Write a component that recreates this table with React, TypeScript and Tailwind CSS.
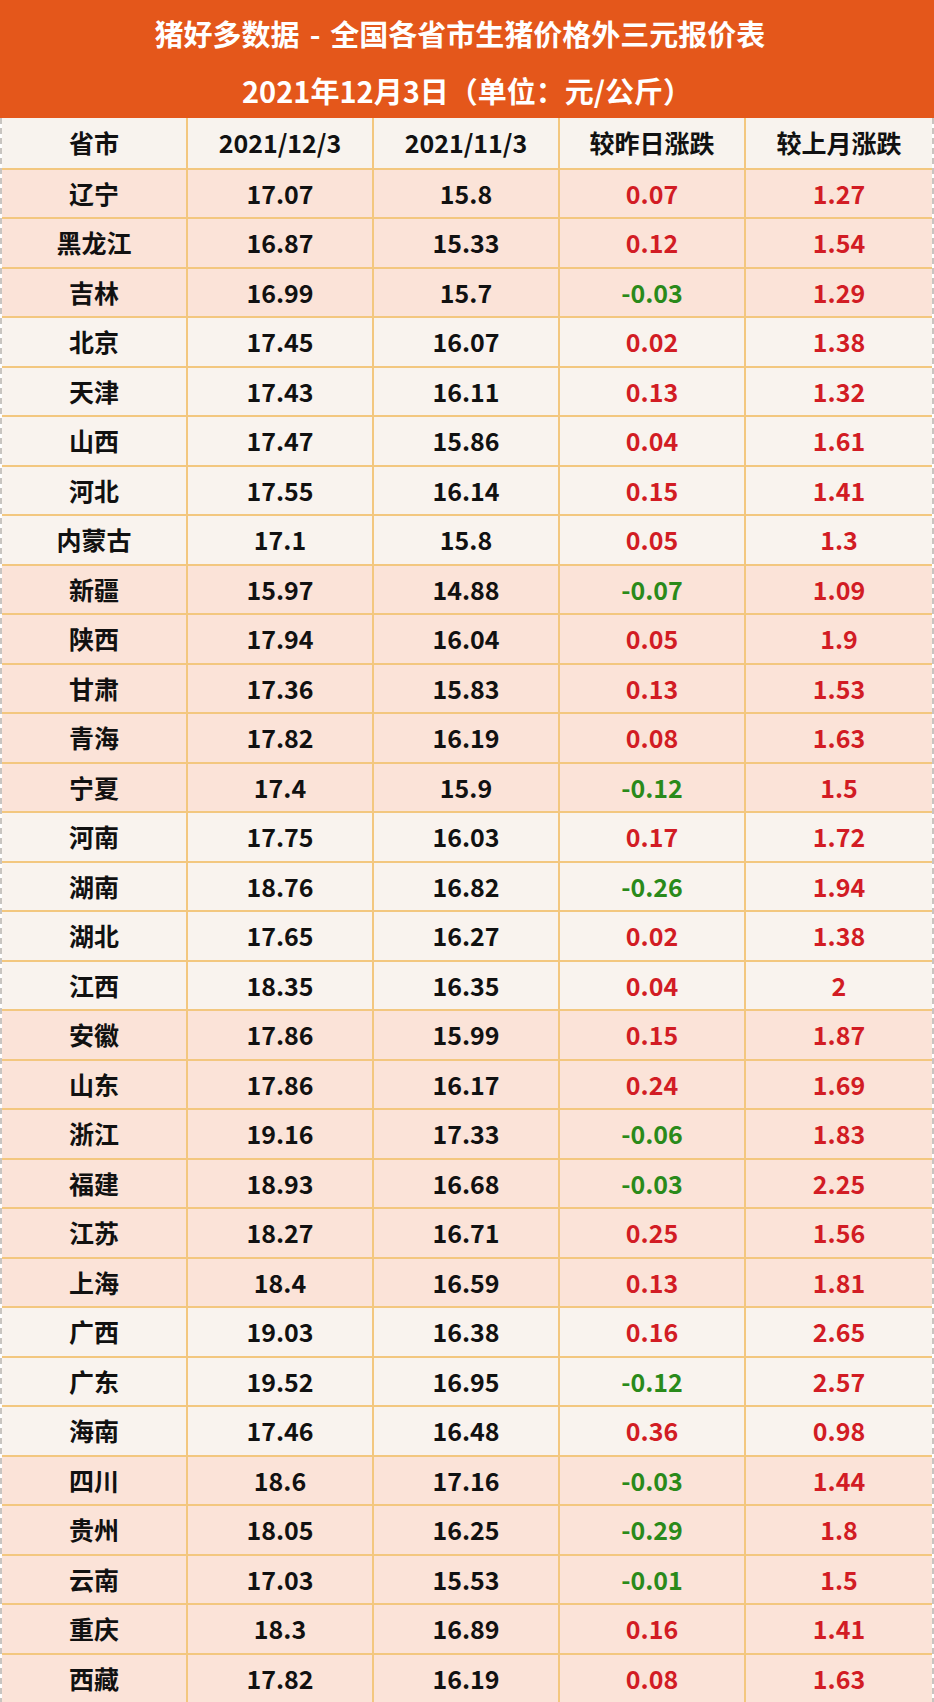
const rows: [string, string, string, string, string, boolean][] = [
  ['辽宁', '17.07', '15.8', '0.07', '1.27', true],
  ['黑龙江', '16.87', '15.33', '0.12', '1.54', true],
  ['吉林', '16.99', '15.7', '-0.03', '1.29', true],
  ['北京', '17.45', '16.07', '0.02', '1.38', false],
  ['天津', '17.43', '16.11', '0.13', '1.32', false],
  ['山西', '17.47', '15.86', '0.04', '1.61', false],
  ['河北', '17.55', '16.14', '0.15', '1.41', false],
  ['内蒙古', '17.1', '15.8', '0.05', '1.3', false],
  ['新疆', '15.97', '14.88', '-0.07', '1.09', true],
  ['陕西', '17.94', '16.04', '0.05', '1.9', true],
  ['甘肃', '17.36', '15.83', '0.13', '1.53', true],
  ['青海', '17.82', '16.19', '0.08', '1.63', true],
  ['宁夏', '17.4', '15.9', '-0.12', '1.5', true],
  ['河南', '17.75', '16.03', '0.17', '1.72', false],
  ['湖南', '18.76', '16.82', '-0.26', '1.94', false],
  ['湖北', '17.65', '16.27', '0.02', '1.38', false],
  ['江西', '18.35', '16.35', '0.04', '2', false],
  ['安徽', '17.86', '15.99', '0.15', '1.87', true],
  ['山东', '17.86', '16.17', '0.24', '1.69', true],
  ['浙江', '19.16', '17.33', '-0.06', '1.83', true],
  ['福建', '18.93', '16.68', '-0.03', '2.25', true],
  ['江苏', '18.27', '16.71', '0.25', '1.56', true],
  ['上海', '18.4', '16.59', '0.13', '1.81', true],
  ['广西', '19.03', '16.38', '0.16', '2.65', false],
  ['广东', '19.52', '16.95', '-0.12', '2.57', false],
  ['海南', '17.46', '16.48', '0.36', '0.98', false],
  ['四川', '18.6', '17.16', '-0.03', '1.44', true],
  ['贵州', '18.05', '16.25', '-0.29', '1.8', true],
  ['云南', '17.03', '15.53', '-0.01', '1.5', true],
  ['重庆', '18.3', '16.89', '0.16', '1.41', true],
  ['西藏', '17.82', '16.19', '0.08', '1.63', true],
];

const cell = 'flex items-center justify-center border-r-2 border-[#f3c77f] last:border-r-0';

function Change({ value }: { value: string }) {
  const down = value.startsWith('-');
  return <span className={down ? 'text-[#2a8a1a]' : 'text-[#d21c24]'}>{value}</span>;
}

export default function App() {
  return (
    <div className="w-[934px] h-[1702px] bg-white font-['Noto_Sans_CJK_SC','Noto_Sans',sans-serif] font-bold">
      <div className="h-[118px] bg-[#e4571b] text-white flex flex-col items-center pt-[12px]">
        <div className="text-[29px] leading-[42px] pr-[14px]">
          猪好多数据<span className="px-[10px]">-</span>全国各省市生猪价格外三元报价表
        </div>
        <div className="text-[29px] leading-[42px] mt-[15px]">2021年12月3日（单位：元/公斤）</div>
      </div>

      <div className="border-x-2 border-b-2 border-dashed border-[#c8c4c0] text-[25px] text-[#111]">
        <div className="grid grid-cols-5 h-[49.5px] bg-[#f8f3ee]">
          <div className={cell}>省市</div>
          <div className={cell}>2021/12/3</div>
          <div className={cell}>2021/11/3</div>
          <div className={cell}>较昨日涨跌</div>
          <div className={cell}>较上月涨跌</div>
        </div>
        {rows.map(([name, cur, prev, day, month, pink]) => (
          <div
            key={name}
            className={`grid grid-cols-5 h-[49.5px] border-t-2 border-[#f3c77f] ${pink ? 'bg-[#fbe3d8]' : 'bg-[#f9f3ee]'}`}
          >
            <div className={cell}>{name}</div>
            <div className={cell}>{cur}</div>
            <div className={cell}>{prev}</div>
            <div className={cell}>
              <Change value={day} />
            </div>
            <div className={cell}>
              <span className="text-[#d21c24]">{month}</span>
            </div>
          </div>
        ))}
      </div>
    </div>
  );
}
